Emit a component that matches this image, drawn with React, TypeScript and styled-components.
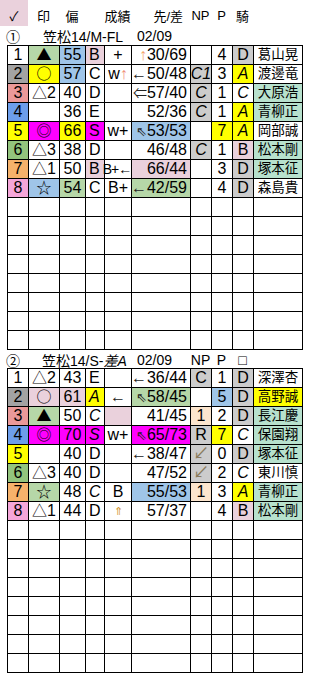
import React from 'react';
import styled, { createGlobalStyle } from 'styled-components';

const GlobalStyle = createGlobalStyle`
  html, body {
    margin: 0;
    padding: 0;
    background: #fff;
  }
  body {
    font-family: 'Liberation Sans', 'Noto Sans CJK JP', sans-serif;
    color: #000;
  }
`;

const COLS = '28px 31px 26px 19px 27px 59px 21px 21px 21px 49px';
const SHEET_COLS = '21px 31px 26px 19px 27px 59px 21px 21px 21px 49px';

const PINK = '#ead1dc';
const LBLUE = '#9fc5e8';
const LGREEN = '#b6d7a8';
const MINT = '#b7e1cd';
const GRAY = '#cccccc';
const YELLOW = '#ffff00';
const MAGENTA = '#ff00ff';
const CREAM = '#fce5cd';

const NUM_BG = ['#ffffff', '#a3a3a3', '#ea9999', '#6d9eeb', '#ffff00', '#93c47d', '#f6b26b', '#f5a6d9'];

const Page = styled.div`
  width: 310px;
  height: 674px;
  overflow: hidden;
`;

const HeaderBar = styled.div`
  display: grid;
  grid-template-columns: ${COLS};
  height: 26px;
  font-size: 13px;
`;

const HeadItem = styled.div<{ $bg?: string; $align?: string }>`
  display: flex;
  align-items: center;
  justify-content: ${(p) => p.$align || 'center'};
  padding-top: 5px;
  padding-right: ${(p) => (p.$align === 'flex-end' ? '7px' : '0')};
  background: ${(p) => p.$bg || 'transparent'};
  white-space: nowrap;
`;

const TitleRow = styled.div<{ $h: number }>`
  display: grid;
  grid-template-columns: ${COLS};
  height: ${(p) => p.$h}px;
  font-size: 14px;
  align-items: center;
  white-space: nowrap;
`;

const TitleItem = styled.div<{ $span?: number; $pad?: number; $center?: boolean }>`
  grid-column: span ${(p) => p.$span || 1};
  padding-left: ${(p) => p.$pad || 0}px;
  text-align: ${(p) => (p.$center ? 'center' : 'left')};
`;

const Sheet = styled.div`
  display: grid;
  grid-template-columns: ${SHEET_COLS};
  grid-auto-rows: 19px;
  width: fit-content;
  margin-left: 7px;
  border-left: 1px solid #000;
  border-top: 1px solid #000;
  font-size: 16px;
`;

type Align = 'center' | 'left' | 'right';

const Cell = styled.div<{ $bg?: string; $align: Align; $italic?: boolean; $small?: boolean }>`
  box-sizing: border-box;
  border-right: 1px solid #000;
  border-bottom: 1px solid #000;
  background: ${(p) => p.$bg || '#fff'};
  display: flex;
  align-items: center;
  justify-content: ${(p) =>
    p.$align === 'left' ? 'flex-start' : p.$align === 'right' ? 'flex-end' : 'center'};
  padding: ${(p) => (p.$align === 'left' ? '0 0 0 3px' : p.$align === 'right' ? '0 3px 0 0' : '0')};
  font-style: ${(p) => (p.$italic ? 'italic' : 'normal')};
  font-size: ${(p) => (p.$small ? '13.5px' : 'inherit')};
  line-height: 1;
  white-space: nowrap;
  overflow: visible;
`;

const Mark = styled.span`
  font-family: 'Noto Sans CJK JP', sans-serif;
  font-size: 15px;
  margin-bottom: 3px;
`;

const Arrow = styled.span<{ $color?: string; $size?: number }>`
  color: ${(p) => p.$color || '#222'};
  font-size: ${(p) => (p.$size ? `${p.$size}px` : 'inherit')};
  font-style: normal;
`;

const Tight = styled.span`
  font-size: 14px;
  letter-spacing: -1px;
  margin-left: -2px;
`;

type CellData = string | { t?: React.ReactNode; bg?: string; i?: boolean };
type Row = CellData[];

const ALIGN: Align[] = ['center', 'center', 'center', 'left', 'center', 'right', 'center', 'center', 'center', 'center'];

const up = <Arrow $color="#f2a56b">↑</Arrow>;

const race1: Row[] = [
  ['1', { t: '▲', bg: LGREEN }, { t: '55', bg: LBLUE }, { t: 'B', bg: PINK }, '+',
    { t: <>{up}30/69</> }, '', '4', { t: 'D', bg: GRAY }, '葛山晃'],
  ['2', { t: '○', bg: YELLOW }, { t: '57', bg: LBLUE }, 'C',
    { t: <>w<Arrow $color="#ef8f7a">↑</Arrow></> }, { t: <><Arrow>←</Arrow>50/48</> },
    { t: 'C1', bg: GRAY, i: true }, '3', { t: 'A', bg: YELLOW, i: true }, '渡邊竜'],
  ['3', '△2', '40', 'D', '', { t: <><Arrow $size={14}>⇐</Arrow>57/40</> },
    { t: 'C', bg: GRAY, i: true }, '1', { t: 'C', i: true }, { t: '大原浩', bg: MINT }],
  ['4', '', '36', 'E', '', '52/36', { t: 'C', bg: GRAY, i: true }, '1',
    { t: 'A', bg: YELLOW, i: true }, { t: '青柳正', bg: MINT }],
  ['5', { t: '◎', bg: MAGENTA }, { t: '66', bg: YELLOW }, { t: 'S', bg: MAGENTA }, 'w+',
    { t: <><Arrow $size={13}>⇖</Arrow>53/53</>, bg: LBLUE }, '', { t: '7', bg: YELLOW },
    { t: 'A', bg: YELLOW, i: true }, '岡部誠'],
  ['6', '△3', '38', 'D', '', '46/48', { t: 'C', bg: GRAY, i: true }, '1',
    { t: 'B', bg: PINK }, { t: '松本剛', bg: MINT }],
  ['7', '△1', '50', { t: 'B', bg: PINK }, { t: <Tight>B+←</Tight> }, { t: '66/44', bg: PINK },
    '', '3', { t: 'D', bg: GRAY }, { t: '塚本征', bg: MINT }],
  ['8', { t: '☆', bg: LBLUE }, { t: '54', bg: LGREEN }, 'C', 'B+',
    { t: <><Arrow>←</Arrow>42/59</>, bg: LGREEN }, '', '4', { t: 'D', bg: GRAY }, '森島貴'],
];

const sw = <Arrow $color="#8a7b5c">↙</Arrow>;

const race2: Row[] = [
  ['1', '△2', '43', 'E', '', { t: <><Arrow>←</Arrow>36/44</> }, { t: 'C', bg: GRAY }, '1',
    { t: 'D', bg: GRAY }, '深澤杏'],
  ['2', { t: '○', bg: PINK }, { t: '61', bg: PINK }, { t: 'A', bg: YELLOW, i: true },
    { t: <Arrow>←</Arrow> }, { t: <><Arrow $size={13}>⇖</Arrow>58/45</>, bg: LGREEN }, '',
    { t: '5', bg: LBLUE }, { t: 'D', bg: GRAY }, { t: '高野誠', bg: YELLOW }],
  ['3', { t: '▲', bg: LGREEN }, '50', { t: 'C', i: true }, { bg: PINK }, '41/45',
    { t: '1', bg: CREAM }, '2', { t: 'D', bg: GRAY }, { t: '長江慶', bg: MINT }],
  ['4', { t: '◎', bg: MAGENTA }, { t: '70', bg: MAGENTA }, { t: 'S', bg: MAGENTA, i: true }, 'w+',
    { t: <><Arrow $size={13}>⇖</Arrow>65/73</>, bg: MAGENTA }, { t: 'R', bg: GRAY },
    { t: '7', bg: YELLOW }, { t: 'C', i: true }, { t: '保園翔', bg: MINT }],
  ['5', '', '40', 'D', '', { t: <><Arrow>←</Arrow>38/47</> }, { t: sw, bg: GRAY }, '0',
    { t: 'D', bg: GRAY }, { t: '塚本征', bg: MINT }],
  ['6', '△3', '40', 'D', '', '47/52', { t: sw, bg: GRAY }, '2', { t: 'C', i: true }, '東川慎'],
  ['7', { t: '☆', bg: LGREEN }, '48', { t: 'C', i: true }, 'B', { t: '55/53', bg: LBLUE },
    { t: '1', bg: CREAM }, '3', { t: 'A', bg: YELLOW, i: true }, { t: '青柳正', bg: MINT }],
  ['8', '△1', '44', 'D', { t: <Arrow $color="#d3922f" $size={11}>⇑</Arrow> }, '57/37', '', '4',
    { t: 'B', bg: PINK }, { t: '松本剛', bg: MINT }],
];

const EMPTY_ROWS = 8;

// the mark column: symbol glyphs come from the CJK font, the digit after △ stays Latin
function markContent(t: React.ReactNode) {
  if (typeof t !== 'string' || !t) return t;
  const sym = t[0];
  const rest = t.slice(1);
  return (
    <>
      <Mark>{sym}</Mark>
      {rest}
    </>
  );
}

function RaceSheet({ rows }: { rows: Row[] }) {
  const all: Row[] = [...rows, ...Array.from({ length: EMPTY_ROWS }, () => Array(10).fill(''))];
  return (
    <Sheet>
      {all.map((row, r) =>
        row.map((c, i) => {
          const d = typeof c === 'string' ? { t: c } : c;
          const bg = i === 0 && r < rows.length ? NUM_BG[r] : d.bg;
          return (
            <Cell key={`${r}-${i}`} $bg={bg} $align={ALIGN[i]} $italic={d.i} $small={i === 9}>
              {i === 1 ? markContent(d.t) : d.t}
            </Cell>
          );
        })
      )}
    </Sheet>
  );
}

export default function App() {
  return (
    <Page>
      <GlobalStyle />
      <HeaderBar>
        <HeadItem $bg={PINK}>✓</HeadItem>
        <HeadItem>印</HeadItem>
        <HeadItem>偏</HeadItem>
        <HeadItem />
        <HeadItem>成績</HeadItem>
        <HeadItem $align="flex-end">先/差</HeadItem>
        <HeadItem>NP</HeadItem>
        <HeadItem>P</HeadItem>
        <HeadItem>騎</HeadItem>
        <HeadItem />
      </HeaderBar>
      <TitleRow $h={19}>
        <TitleItem $pad={6}>①</TitleItem>
        <TitleItem $span={4} $pad={15}>笠松14/M-FL</TitleItem>
        <TitleItem $span={2} $pad={6}>02/09</TitleItem>
      </TitleRow>
      <RaceSheet rows={race1} />
      <TitleRow $h={18}>
        <TitleItem $pad={6}>②</TitleItem>
        <TitleItem $span={4} $pad={14}>笠松14/S-<i>差A</i></TitleItem>
        <TitleItem $pad={6}>02/09</TitleItem>
        <TitleItem $center>NP</TitleItem>
        <TitleItem $center>P</TitleItem>
        <TitleItem $center>□</TitleItem>
      </TitleRow>
      <RaceSheet rows={race2} />
    </Page>
  );
}
